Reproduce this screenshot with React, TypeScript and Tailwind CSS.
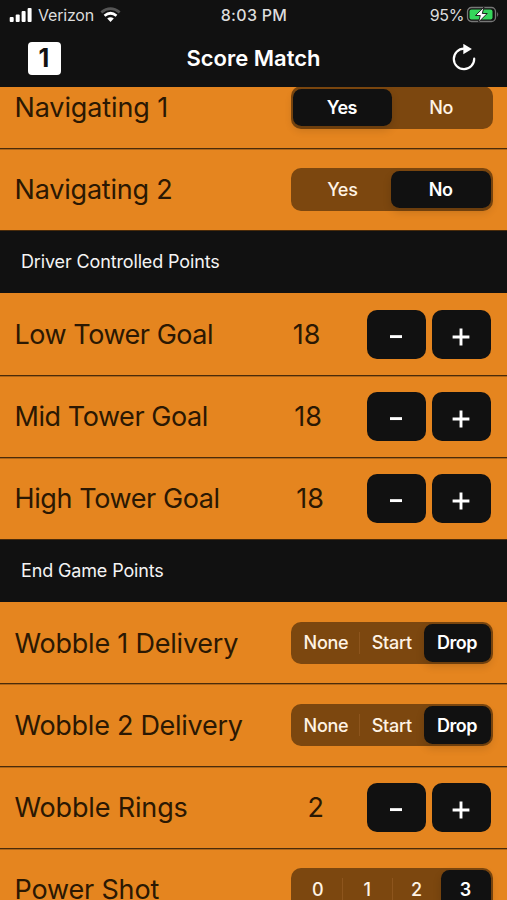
import React from 'react';

type SegmentedProps = { options: string[]; selected: number };

function Segmented({ options, selected }: SegmentedProps) {
  return (
    <div className="flex h-[42.5px] w-[202px] rounded-[10px] bg-[#7c470f] py-[2.5px] pr-[2.5px] pl-[2px]">
      {options.map((option, i) => {
        const active = i === selected;
        const divided = options.length > 2 && i > 0 && !active;
        return (
          <div key={option} className="relative h-full flex-1">
            {divided && <span className="absolute top-2 left-0 h-[22px] w-px bg-[#8d551d]" />}
            <div
              className={
                active
                  ? '-mx-[0.5px] flex h-full items-center justify-center rounded-[8.5px] bg-[#111] pr-px text-[18px] font-semibold tracking-[-0.5px] text-white shadow-[0_4px_9px_rgba(0,0,0,0.15)]'
                  : 'flex h-full items-center justify-center text-[18px] font-medium tracking-[-0.3px] text-[#fff3e4]'
              }
            >
              {option}
            </div>
          </div>
        );
      })}
    </div>
  );
}

function StepButton({ plus = false }: { plus?: boolean }) {
  return (
    <button
      aria-label={plus ? 'Increase' : 'Decrease'}
      className="flex h-[49px] w-[59.5px] items-center justify-center rounded-[10px] bg-[#111] pt-[6px]"
    >
      <svg width="20" height="20" viewBox="0 0 20 20" fill="none" stroke="#fff" strokeWidth="2.9">
        {plus ? <path d="M1.6 10H18.4M10 1.6V18.4" /> : <path d="M4 9.6H16" />}
      </svg>
    </button>
  );
}

function Row({ label, tracking, children }: { label: string; tracking: string; children: React.ReactNode }) {
  return (
    <div className="flex h-[82.1px] shrink-0 items-center justify-between border-b border-[#4a2b0a] pr-[14px] pl-[14.5px] shadow-[0_1px_0_rgba(74,43,10,0.35)]">
      <span className={`pt-[1.5px] text-[27px] leading-[32px] whitespace-nowrap text-[#2b1803] ${tracking}`}>
        {label}
      </span>
      {children}
    </div>
  );
}

function Stepper({ value, gap }: { value: number; gap: string }) {
  return (
    <div className="flex items-center gap-[5.5px] pr-[2px]">
      <span className={`pt-[1.5px] text-[27px] leading-[32px] text-[#2b1803] ${gap}`}>{value}</span>
      <StepButton />
      <StepButton plus />
    </div>
  );
}

function Section({ title }: { title: string }) {
  return (
    <div className="z-[1] flex h-[62.6px] shrink-0 items-center bg-[#111] pl-[21px]">
      <span className="text-[18px] leading-none tracking-[-0.14px] text-[#f4f4f4]">{title}</span>
    </div>
  );
}

function StatusBar() {
  return (
    <div className="grid h-[29px] grid-cols-3 items-center text-[16px] leading-none text-[#ddd]">
      <div className="flex items-center pl-[9px]">
        <svg width="24" height="16" viewBox="0 0 24 16" fill="#fff">
          <rect x="0.7" y="10" width="4" height="5" rx="1" />
          <rect x="6.7" y="7.5" width="4" height="7.5" rx="1" />
          <rect x="12.6" y="4" width="4" height="11" rx="1" />
          <rect x="18.6" y="1" width="4" height="14" rx="1" />
        </svg>
        <span className="ml-[5px] tracking-[-0.2px]">Verizon</span>
        <svg className="ml-[6px]" width="21" height="16" viewBox="0 0 21 16" fill="none" strokeWidth="2.7">
          <path d="M1.3 5.4Q10.5 -2 19.7 5.4" stroke="#555" />
          <path d="M4.5 8.7Q10.5 3.8 16.5 8.7" stroke="#fff" />
          <path d="M7.2 11.6Q10.5 9 13.8 11.6L10.5 15Z" fill="#fff" stroke="none" />
        </svg>
      </div>
      <span className="pl-px text-center font-medium tracking-[0.3px]">8:03 PM</span>
      <div className="flex items-center justify-end pr-[7px]">
        <span className="tracking-[-0.4px]">95%</span>
        <svg className="ml-[2px]" width="34" height="18" viewBox="0 0 34 18">
          <rect x="1.5" y="1.5" width="28" height="14" rx="4" fill="none" stroke="#777" strokeWidth="1.3" />
          <rect x="3.5" y="3.5" width="23" height="10" rx="2" fill="#35d65b" />
          <path d="M31.2 6Q33.2 8.5 31.2 11Z" fill="#777" />
          <path d="M18 1.1L9.5 9.5H14.3L12.5 16.2L21.2 7.5H16.3Z" fill="#fff" stroke="#111" strokeWidth="0.9" />
        </svg>
      </div>
    </div>
  );
}

export default function App() {
  return (
    <div className="flex h-[900px] w-[507px] flex-col overflow-hidden bg-[#e5851f] font-['Inter','Liberation_Sans',sans-serif]">
      <header className="z-10 h-[87px] shrink-0 bg-[#111]">
        <StatusBar />
        <div className="grid h-[58px] grid-cols-3 items-center">
          <div className="ml-7 flex h-[33px] w-[33px] items-center justify-center rounded-[4px] bg-white pr-px text-[25px] leading-none font-bold text-[#111]">
            1
          </div>
          <h1 className="text-center text-[22px] leading-none font-semibold tracking-[0px] whitespace-nowrap text-white">
            Score Match
          </h1>
          <div className="flex justify-end pr-[30px]">
            <svg width="26" height="28" viewBox="0 0 26 28" fill="none">
              <path d="M23.2 14.7A10.2 10.2 0 1 1 13 4.7" stroke="#fff" strokeWidth="2.2" strokeLinecap="round" />
              <path d="M12.3 -0.2L20.9 4.9L12.3 10.2Z" fill="#fff" />
            </svg>
          </div>
        </div>
      </header>
      <main className="-mt-[20.3px] flex flex-1 flex-col overflow-hidden">
        <Row label="Navigating 1" tracking="tracking-[-0.12px]">
          <Segmented options={['Yes', 'No']} selected={0} />
        </Row>
        <Row label="Navigating 2" tracking="tracking-[-0.2px]">
          <Segmented options={['Yes', 'No']} selected={1} />
        </Row>
        <Section title="Driver Controlled Points" />
        <Row label="Low Tower Goal" tracking="tracking-[-0.46px]">
          <Stepper value={18} gap="mr-[40.5px]" />
        </Row>
        <Row label="Mid Tower Goal" tracking="tracking-[-0.44px]">
          <Stepper value={18} gap="mr-[39px]" />
        </Row>
        <Row label="High Tower Goal" tracking="tracking-[-0.4px]">
          <Stepper value={18} gap="mr-[37px]" />
        </Row>
        <Section title="End Game Points" />
        <Row label="Wobble 1 Delivery" tracking="tracking-[-0.22px]">
          <Segmented options={['None', 'Start', 'Drop']} selected={2} />
        </Row>
        <Row label="Wobble 2 Delivery" tracking="tracking-[-0.28px]">
          <Segmented options={['None', 'Start', 'Drop']} selected={2} />
        </Row>
        <Row label="Wobble Rings" tracking="tracking-[-0.16px]">
          <Stepper value={2} gap="mr-[37px]" />
        </Row>
        <Row label="Power Shot" tracking="tracking-[-0.16px]">
          <Segmented options={['0', '1', '2', '3']} selected={3} />
        </Row>
      </main>
    </div>
  );
}
